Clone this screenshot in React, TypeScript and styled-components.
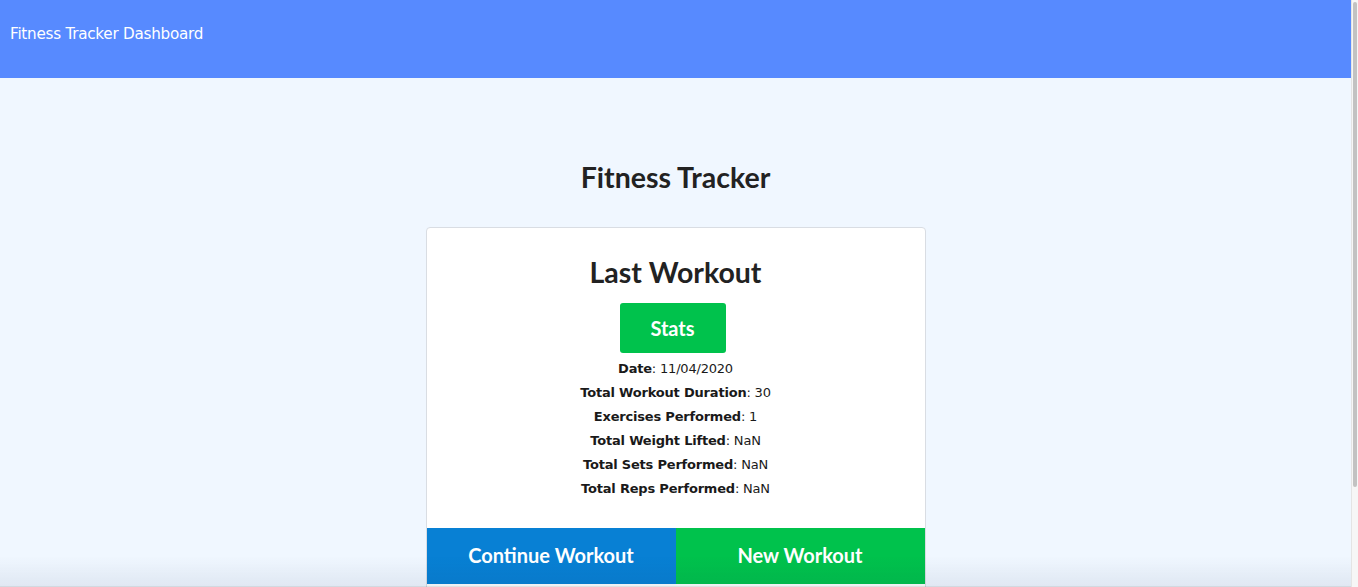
import React from "react";
import styled, { createGlobalStyle } from "styled-components";

const GlobalStyle = createGlobalStyle`
  html {
    overflow: hidden;
  }
  body {
    margin: 0;
    background-color: #f0f7ff;
    font-family: "DejaVu Sans", Verdana, sans-serif;
    color: #222;
  }
`;

const Page = styled.div`
  min-height: 707px;
  margin-right: 7px;
  display: flex;
  flex-direction: column;
`;

const Header = styled.header`
  height: 78px;
  background-color: #578aff;
  color: #fff;
  font-size: 15.2px;
  letter-spacing: -0.25px;
  padding: 25px 10px 0;
  box-sizing: border-box;
`;

const Main = styled.main`
  display: flex;
  flex-direction: column;
  align-items: center;
  padding-top: 82px;
`;

const Title = styled.h1`
  font-family: Lato, sans-serif;
  font-weight: 700;
  font-size: 28.5px;
  line-height: 34px;
  margin: 0 0 33px;
`;

const Card = styled.section`
  width: 500px;
  background: #fff;
  border: 1px solid #d9dde3;
  border-radius: 4px;
  overflow: hidden;
  box-sizing: border-box;
  display: flex;
  flex-direction: column;
  align-items: center;
`;

const CardTitle = styled.h2`
  font-family: Lato, sans-serif;
  font-weight: 700;
  font-size: 28.5px;
  line-height: 34px;
  margin: 27px 0 14px;
`;

const StatsButton = styled.button`
  width: 106px;
  height: 50px;
  margin-right: 6px;
  border: none;
  border-radius: 3px;
  background: #00c24c;
  color: #fff;
  font-family: Lato, sans-serif;
  font-weight: 700;
  font-size: 20px;
  cursor: pointer;
`;

const StatList = styled.ul`
  list-style: none;
  margin: 4px 0 27px;
  padding: 0;
  text-align: center;
  font-size: 13px;
  letter-spacing: -0.2px;
  line-height: 24px;
  color: #1a1a1a;
`;

const Label = styled.strong`
  font-weight: 700;
`;

const Actions = styled.div`
  display: flex;
  width: 100%;
`;

const ActionButton = styled.button<{ $color: string }>`
  flex: 1;
  height: 56px;
  border: none;
  background: ${(p) => p.$color};
  color: #fff;
  font-family: Lato, sans-serif;
  font-weight: 700;
  font-size: 20px;
  padding-bottom: 4px;
  cursor: pointer;
`;

const Spacer = styled.div`
  height: 120px;
  width: 100%;
`;

const BottomShade = styled.div`
  position: fixed;
  left: 0;
  right: 7px;
  bottom: 0;
  height: 30px;
  pointer-events: none;
  background: linear-gradient(rgba(20, 40, 80, 0), rgba(20, 40, 80, 0.07));
  border-bottom: 1px solid rgba(0, 0, 0, 0.12);
`;

const ScrollTrack = styled.div`
  position: fixed;
  top: 0;
  right: 0;
  width: 7px;
  height: 100%;
  background: #f6f6f6;
  border-left: 1px solid #e4e4e4;
  box-sizing: border-box;
  padding: 2px 1px 0 1px;
`;

const ScrollThumb = styled.div`
  height: 485px;
  background: #c2c2c2;
  border-radius: 2px;
`;

const stats = [
  { label: "Date", value: "11/04/2020" },
  { label: "Total Workout Duration", value: "30" },
  { label: "Exercises Performed", value: "1" },
  { label: "Total Weight Lifted", value: "NaN" },
  { label: "Total Sets Performed", value: "NaN" },
  { label: "Total Reps Performed", value: "NaN" },
];

export default function App() {
  return (
    <Page>
      <GlobalStyle />
      <Header>Fitness Tracker Dashboard</Header>
      <Main>
        <Title>Fitness Tracker</Title>
        <Card>
          <CardTitle>Last Workout</CardTitle>
          <StatsButton>Stats</StatsButton>
          <StatList>
            {stats.map((s) => (
              <li key={s.label}>
                <Label>{s.label}</Label>: {s.value}
              </li>
            ))}
          </StatList>
          <Actions>
            <ActionButton $color="#0880d4">Continue Workout</ActionButton>
            <ActionButton $color="#00c24c">New Workout</ActionButton>
          </Actions>
          <Spacer />
        </Card>
      </Main>
      <BottomShade />
      <ScrollTrack>
        <ScrollThumb />
      </ScrollTrack>
    </Page>
  );
}
